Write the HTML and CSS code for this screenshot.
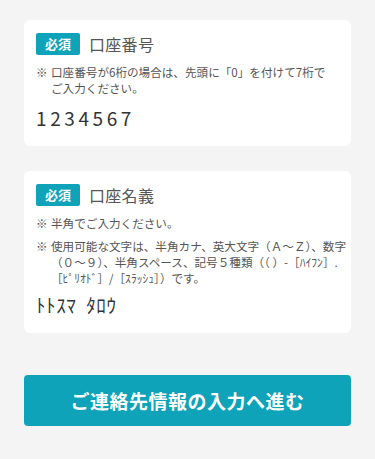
FILE: index.html
```html
<!DOCTYPE html>
<html lang="ja">
<head>
  <meta charset="UTF-8">
  <meta name="viewport" content="width=device-width, initial-scale=1.0">
  <title>口座情報の確認</title>
  <link rel="stylesheet" href="styles.css">
</head>
<body>
  <main class="page">
    <!-- 口座番号 -->
    <section class="card">
      <div class="field-head">
        <span class="badge">必須</span>
        <h2 class="field-title">口座番号</h2>
      </div>
      <ul class="notes">
        <li>口座番号が6桁の場合は、先頭に「0」を付けて7桁で<br>ご入力ください。</li>
      </ul>
      <p class="value value-number">1234567</p>
    </section>

    <!-- 口座名義 -->
    <section class="card">
      <div class="field-head">
        <span class="badge">必須</span>
        <h2 class="field-title">口座名義</h2>
      </div>
      <ul class="notes">
        <li>半角でご入力ください。</li>
        <li>使用可能な文字は、半角カナ、英大文字（Ａ～Ｚ）、数字<br>（０～９）、半角スペース、記号５種類（（&nbsp;）-［ﾊｲﾌﾝ］.<br>［ﾋﾟﾘｵﾄﾞ］/［ｽﾗｯｼｭ］）です。</li>
      </ul>
      <p class="value value-name">ﾄﾄｽﾏ ﾀﾛｳ</p>
    </section>

    <button class="next-btn" type="button">ご連絡先情報の入力へ進む</button>
  </main>
</body>
</html>
```

FILE: styles.css
```css
body {
  margin: 0;
  font-family: "Noto Sans CJK JP", "Noto Sans", sans-serif;
  background-color: #f4f4f4;
  color: #555555;
}
.page {
  padding: 20px 24px 34px;
}
.card {
  background-color: #ffffff;
  border-radius: 6px;
  padding: 13px 6px 16px 12px;
  margin-bottom: 25px;
}
.field-head {
  display: flex;
  align-items: center;
  gap: 9px;
  height: 22px;
}
.badge {
  background-color: #0ea3b8;
  color: #ffffff;
  font-size: 13px;
  font-weight: bold;
  line-height: 22px;
  padding: 0 9px;
  border-radius: 2px;
}
.field-title {
  margin: 0;
  font-size: 16px;
  font-weight: normal;
  color: #555555;
  letter-spacing: 0.3px;
}
.notes {
  list-style: none;
  margin: 9px 0 0;
  padding: 0;
  font-size: 11.6px;
  line-height: 16px;
  color: #555555;
  white-space: nowrap;
}
.notes li {
  position: relative;
  padding-left: 15px;
  margin-bottom: 7px;
}
.notes li:last-child {
  margin-bottom: 0;
}
.notes li::before {
  content: "※";
  position: absolute;
  left: 0;
  top: 0;
}
.value {
  margin: 10px 0 0;
  line-height: 24px;
  color: #333333;
}
.value-number {
  font-size: 19px;
  letter-spacing: 3.6px;
}
.value-name {
  margin-top: 7px;
  font-size: 19px;
  letter-spacing: 0.6px;
  word-spacing: 5px;
}
.next-btn {
  display: block;
  width: 100%;
  height: 51px;
  margin-top: 42px;
  border: none;
  border-radius: 4px;
  background-color: #0ea3b8;
  color: #ffffff;
  font-family: inherit;
  font-size: 19px;
  font-weight: bold;
  letter-spacing: 0.5px;
}
```
